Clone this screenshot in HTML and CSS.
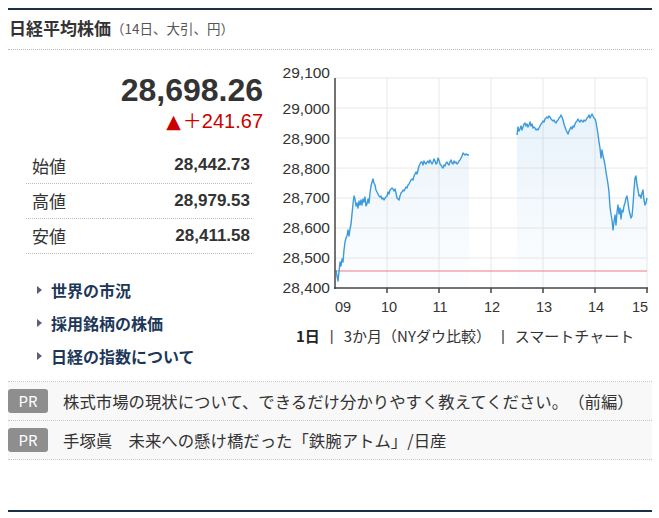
FILE: index.html
```html
<!DOCTYPE html>
<html lang="ja">
<head>
<meta charset="utf-8">
<title>日経平均株価</title>
<link rel="stylesheet" href="styles.css">
</head>
<body>
<div class="panel">
  <div class="head">
    <h1 class="title">日経平均株価</h1><span class="sub">（14日、大引、円）</span>
  </div>
  <div class="main">
    <div class="left">
      <div class="price">28,698.26</div>
      <div class="change"><span class="tri">▲</span><span class="plus">＋</span>241.67</div>
      <table class="ohl">
        <tr><th>始値</th><td>28,442.73</td></tr>
        <tr><th>高値</th><td>28,979.53</td></tr>
        <tr><th>安値</th><td>28,411.58</td></tr>
      </table>
      <ul class="links">
        <li><span class="arrow"></span>世界の市況</li>
        <li><span class="arrow"></span>採用銘柄の株価</li>
        <li><span class="arrow"></span>日経の指数について</li>
      </ul>
    </div>
    <div class="right">
      <svg class="chart" width="382" height="272" viewBox="270 50 382 272" xmlns="http://www.w3.org/2000/svg">
        <defs>
          <linearGradient id="fillg" gradientUnits="userSpaceOnUse" x1="0" y1="110" x2="0" y2="288">
            <stop offset="0" stop-color="#4a9fe0" stop-opacity="0.13"/>
            <stop offset="1" stop-color="#4a9fe0" stop-opacity="0.01"/>
          </linearGradient>
        </defs>
        <g class="grid">
          <line x1="335" y1="78" x2="647" y2="78"/>
          <line x1="335" y1="108" x2="647" y2="108"/>
          <line x1="335" y1="138" x2="647" y2="138"/>
          <line x1="335" y1="168" x2="647" y2="168"/>
          <line x1="335" y1="198" x2="647" y2="198"/>
          <line x1="335" y1="228" x2="647" y2="228"/>
          <line x1="335" y1="258" x2="647" y2="258"/>
          <line x1="387" y1="78" x2="387" y2="288"/>
          <line x1="439" y1="78" x2="439" y2="288"/>
          <line x1="491" y1="78" x2="491" y2="288"/>
          <line x1="543" y1="78" x2="543" y2="288"/>
          <line x1="595" y1="78" x2="595" y2="288"/>
          <line x1="647" y1="78" x2="647" y2="288"/>
        </g>
        <path class="area" d="M336,270 L337,276 L338,281 L339,272 L340,262 L341,266 L342,259 L343,262 L344,250 L345,242 L346,238 L347,236 L348,230 L349,236 L350,229 L351,224 L352,214 L353,204 L354,196 L355,199 L356,206 L357,203 L358,208 L359,201 L360,205 L361,200 L362,205 L363,199 L364,202 L365,197 L366,206 L367,204 L368,199 L369,203 L370,193 L371,186 L372,182 L373,179 L374,183 L375,185 L376,190 L377,192 L378,194 L379,196 L380,197 L381,196 L382,199 L383,198 L384,200 L385,198 L386,197 L387,196 L388,192 L389,194 L390,190 L391,189 L392,188 L393,189 L394,191 L395,189 L396,193 L397,198 L398,199 L399,200 L400,196 L401,193 L402,192 L403,190 L404,191 L405,189 L406,187 L407,188 L408,185 L409,184 L410,182 L411,180 L412,179 L413,180 L414,176 L415,174 L416,172 L417,174 L418,170 L419,166 L420,164 L421,162 L422,162 L423,165 L424,161 L425,163 L426,164 L427,162 L428,161 L429,163 L430,160 L431,162 L432,164 L433,162 L434,159 L435,161 L436,164 L437,163 L438,158 L439,160 L440,164 L441,165 L442,167 L443,168 L444,165 L445,166 L446,163 L447,162 L448,164 L449,165 L450,162 L451,160 L452,163 L453,164 L454,161 L455,163 L456,162 L457,164 L458,163 L459,161 L460,160 L461,158 L462,156 L463,153 L464,154 L465,155 L466,154 L468,155 L469,155 L469,288 L336,288 Z"/>
        <path class="area" d="M517,135 L518,127 L519,131 L520,129 L521,126 L522,130 L523,127 L524,124 L525,123 L526,126 L527,124 L528,127 L529,125 L530,122 L531,126 L532,124 L533,128 L534,127 L535,128 L536,130 L537,129 L538,130 L539,128 L540,126 L541,124 L542,123 L543,121 L544,122 L545,119 L546,118 L547,117 L548,118 L549,116 L550,117 L551,119 L552,120 L553,121 L554,120 L555,122 L556,123 L557,121 L558,120 L559,118 L560,117 L561,115 L562,117 L563,120 L564,124 L565,127 L566,130 L567,132 L568,134 L569,131 L570,129 L571,127 L572,129 L573,126 L574,127 L575,124 L576,122 L577,121 L578,119 L579,121 L580,122 L581,120 L582,121 L583,122 L584,120 L585,121 L586,120 L587,118 L588,117 L589,115 L590,118 L591,116 L592,114 L593,116 L594,118 L595,119 L596,122 L597,128 L598,134 L599,142 L600,148 L601,158 L602,150 L603,156 L604,160 L605,165 L606,172 L607,178 L608,184 L609,192 L610,207 L611,214 L612,220 L613,230 L614,222 L615,215 L616,225 L617,212 L618,205 L619,214 L620,208 L621,219 L622,210 L623,212 L624,206 L625,203 L626,198 L627,196 L628,202 L629,210 L630,214 L631,218 L632,216 L633,205 L634,190 L635,178 L636,176 L637,185 L638,190 L639,196 L640,195 L641,198 L642,193 L643,190 L644,200 L645,205 L646,203 L647,198 L647,288 L517,288 Z"/>
        <line class="prev" x1="336" y1="271" x2="647" y2="271"/>
        <path class="line" d="M336,270 L337,276 L338,281 L339,272 L340,262 L341,266 L342,259 L343,262 L344,250 L345,242 L346,238 L347,236 L348,230 L349,236 L350,229 L351,224 L352,214 L353,204 L354,196 L355,199 L356,206 L357,203 L358,208 L359,201 L360,205 L361,200 L362,205 L363,199 L364,202 L365,197 L366,206 L367,204 L368,199 L369,203 L370,193 L371,186 L372,182 L373,179 L374,183 L375,185 L376,190 L377,192 L378,194 L379,196 L380,197 L381,196 L382,199 L383,198 L384,200 L385,198 L386,197 L387,196 L388,192 L389,194 L390,190 L391,189 L392,188 L393,189 L394,191 L395,189 L396,193 L397,198 L398,199 L399,200 L400,196 L401,193 L402,192 L403,190 L404,191 L405,189 L406,187 L407,188 L408,185 L409,184 L410,182 L411,180 L412,179 L413,180 L414,176 L415,174 L416,172 L417,174 L418,170 L419,166 L420,164 L421,162 L422,162 L423,165 L424,161 L425,163 L426,164 L427,162 L428,161 L429,163 L430,160 L431,162 L432,164 L433,162 L434,159 L435,161 L436,164 L437,163 L438,158 L439,160 L440,164 L441,165 L442,167 L443,168 L444,165 L445,166 L446,163 L447,162 L448,164 L449,165 L450,162 L451,160 L452,163 L453,164 L454,161 L455,163 L456,162 L457,164 L458,163 L459,161 L460,160 L461,158 L462,156 L463,153 L464,154 L465,155 L466,154 L468,155 L469,155"/>
        <path class="line" d="M517,135 L518,127 L519,131 L520,129 L521,126 L522,130 L523,127 L524,124 L525,123 L526,126 L527,124 L528,127 L529,125 L530,122 L531,126 L532,124 L533,128 L534,127 L535,128 L536,130 L537,129 L538,130 L539,128 L540,126 L541,124 L542,123 L543,121 L544,122 L545,119 L546,118 L547,117 L548,118 L549,116 L550,117 L551,119 L552,120 L553,121 L554,120 L555,122 L556,123 L557,121 L558,120 L559,118 L560,117 L561,115 L562,117 L563,120 L564,124 L565,127 L566,130 L567,132 L568,134 L569,131 L570,129 L571,127 L572,129 L573,126 L574,127 L575,124 L576,122 L577,121 L578,119 L579,121 L580,122 L581,120 L582,121 L583,122 L584,120 L585,121 L586,120 L587,118 L588,117 L589,115 L590,118 L591,116 L592,114 L593,116 L594,118 L595,119 L596,122 L597,128 L598,134 L599,142 L600,148 L601,158 L602,150 L603,156 L604,160 L605,165 L606,172 L607,178 L608,184 L609,192 L610,207 L611,214 L612,220 L613,230 L614,222 L615,215 L616,225 L617,212 L618,205 L619,214 L620,208 L621,219 L622,210 L623,212 L624,206 L625,203 L626,198 L627,196 L628,202 L629,210 L630,214 L631,218 L632,216 L633,205 L634,190 L635,178 L636,176 L637,185 L638,190 L639,196 L640,195 L641,198 L642,193 L643,190 L644,200 L645,205 L646,203 L647,198"/>
        <g class="axis">
          <line x1="335" y1="78" x2="335" y2="289"/>
          <line x1="334" y1="288" x2="648" y2="288"/>
          <line x1="387" y1="288" x2="387" y2="293"/>
          <line x1="439" y1="288" x2="439" y2="293"/>
          <line x1="491" y1="288" x2="491" y2="293"/>
          <line x1="543" y1="288" x2="543" y2="293"/>
          <line x1="595" y1="288" x2="595" y2="293"/>
          <line x1="647" y1="288" x2="647" y2="293"/>
        </g>
        <g class="ylab">
          <text x="330" y="78">29,100</text>
          <text x="330" y="114">29,000</text>
          <text x="330" y="144">28,900</text>
          <text x="330" y="174">28,800</text>
          <text x="330" y="203">28,700</text>
          <text x="330" y="233">28,600</text>
          <text x="330" y="263">28,500</text>
          <text x="330" y="293">28,400</text>
        </g>
        <g class="xlab">
          <text x="343" y="312">09</text>
          <text x="389" y="312">10</text>
          <text x="440" y="312">11</text>
          <text x="492" y="312">12</text>
          <text x="544" y="312">13</text>
          <text x="596" y="312">14</text>
          <text x="640" y="312">15</text>
        </g>
      </svg>
      <div class="tabs">
        <span class="cur">1日</span><span class="sep">|</span><span>3か月（NYダウ比較）</span><span class="sep">|</span><span>スマートチャート</span>
      </div>
    </div>
  </div>
  <ul class="pr">
    <li><span class="badge">PR</span><span class="pr-text">株式市場の現状について、できるだけ分かりやすく教えてください。（前編）</span></li>
    <li><span class="badge">PR</span><span class="pr-text">手塚眞　未来への懸け橋だった「鉄腕アトム」/日産</span></li>
  </ul>
  <div class="bottom"></div>
</div>
</body>
</html>
```
FILE: styles.css
```css
* { box-sizing: border-box; }
body {
  margin: 0;
  background: #fff;
  color: #333;
  font-family: "Liberation Sans", "Noto Sans CJK JP", sans-serif;
  text-spacing-trim: space-all;
}
.panel {
  margin: 8px 0 0 8px;
  width: 644px;
  border-top: 2px solid #1b3047;
}
.head {
  height: 40px;
  padding: 0 0 4px 1px;
  border-bottom: 1px dotted #bdbdbd;
  display: flex;
  align-items: center;
}
.title {
  margin: 0;
  font-family: "Noto Sans CJK JP", sans-serif;
  font-size: 17px;
  font-weight: bold;
  line-height: 1;
  color: #333;
}
.sub {
  font-family: "Noto Sans CJK JP", sans-serif;
  font-size: 13.5px;
  color: #555;
  line-height: 1;
  padding-top: 2px;
}
.main {
  display: flex;
}
.left {
  width: 262px;
  padding-top: 22px;
}
.price {
  text-align: right;
  padding-right: 7px;
  font-size: 32px;
  font-weight: bold;
  line-height: 36px;
  color: #333;
}
.change {
  text-align: right;
  padding-right: 7px;
  font-size: 20px;
  line-height: 24px;
  color: #cc0000;
}
.tri {
  font-family: "DejaVu Sans", sans-serif;
  font-size: 19px;
  margin-right: 2px;
}
.plus {
  font-family: "Noto Sans CJK JP", sans-serif;
  font-size: 19px;
}
.ohl {
  margin: 15px 0 0 18px;
  width: 226px;
  border-collapse: collapse;
}
.ohl th, .ohl td {
  height: 35px;
  padding: 0;
  border-bottom: 1px dotted #bdbdbd;
}
.ohl th {
  text-align: left;
  padding-left: 6px;
  font-family: "Noto Sans CJK JP", sans-serif;
  font-size: 17px;
  font-weight: normal;
  color: #333;
}
.ohl td {
  text-align: right;
  padding-right: 2px;
  font-size: 17px;
  font-weight: bold;
  color: #333;
}
.links {
  list-style: none;
  margin: 20px 0 0;
  padding: 0 0 0 29px;
}
.links li {
  display: flex;
  align-items: center;
  height: 33px;
  font-family: "Noto Sans CJK JP", sans-serif;
  font-size: 16px;
  font-weight: bold;
  color: #1d3759;
}
.arrow {
  width: 0;
  height: 0;
  border-left: 5px solid #5a6070;
  border-top: 4px solid transparent;
  border-bottom: 4px solid transparent;
  margin-right: 9px;
}
.right {
  width: 382px;
}
.chart {
  display: block;
}
.grid line {
  stroke: #e8e8e8;
  stroke-width: 1;
}
.axis line {
  stroke: #444;
  stroke-width: 1.5;
}
.area {
  fill: url(#fillg);
  stroke: none;
}
.line {
  fill: none;
  stroke: #3b9ade;
  stroke-width: 1.4;
  stroke-linejoin: round;
}
.prev {
  stroke: #ea7d86;
  stroke-width: 1;
}
.ylab text {
  font-family: "Liberation Sans", sans-serif;
  font-size: 15.5px;
  fill: #333;
  text-anchor: end;
}
.xlab text {
  font-family: "Liberation Sans", sans-serif;
  font-size: 14.5px;
  fill: #333;
  text-anchor: middle;
}
.tabs {
  height: 26px;
  display: flex;
  align-items: center;
  padding-left: 26px;
  font-family: "Noto Sans CJK JP", sans-serif;
  font-size: 15px;
  color: #333;
}
.tabs .cur {
  font-weight: bold;
  color: #222;
}
.tabs .sep {
  font-family: "Liberation Sans", sans-serif;
  margin: 0 10px;
  color: #444;
}
.pr {
  list-style: none;
  margin: 8px 0 0;
  padding: 0;
  border-top: 1px dotted #c8c8c8;
}
.pr li {
  height: 39px;
  display: flex;
  align-items: center;
  background: #f8f8f8;
  border-bottom: 1px dotted #c8c8c8;
}
.badge {
  width: 40px;
  height: 24px;
  flex: none;
  display: flex;
  align-items: center;
  justify-content: center;
  background: #8e8e8e;
  color: #fff;
  border-radius: 3px;
  font-family: "Noto Sans CJK JP", sans-serif;
  font-size: 15px;
  margin-right: 15px;
}
.pr-text {
  font-family: "Noto Sans CJK JP", sans-serif;
  font-size: 16.4px;
  color: #333;
  white-space: nowrap;
}
.bottom {
  margin-top: 50px;
  border-top: 2px solid #1b3047;
}
```
